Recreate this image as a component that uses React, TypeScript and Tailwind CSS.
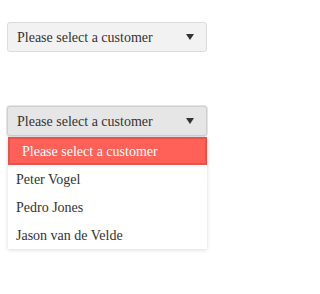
import React from 'react';

const customers = ['Peter Vogel', 'Pedro Jones', 'Jason van de Velde'];

function Caret() {
  return (
    <svg width="8" height="6" viewBox="0 0 8 6" className="fill-[#333]">
      <path d="M0 0 L8 0 L4 6 Z" />
    </svg>
  );
}

export default function App() {
  return (
    <div
      className="min-h-[294px] bg-white pl-[7px] pt-[22px] text-[14px] text-[#333]"
      style={{ fontFamily: '"Liberation Serif", "Times New Roman", serif' }}
    >
      <div className="flex h-[30px] w-[200px] items-center justify-between rounded-[3px] border border-[#dcdcdc] bg-[#f2f2f2] pl-[9px] pr-[12px]">
        <span>Please select a customer</span>
        <Caret />
      </div>

      <div className="mt-[54px] w-[200px]">
        <div className="flex h-[30px] items-center justify-between rounded-[3px] border border-[#cfcfcf] bg-[#e6e6e6] pl-[9px] pr-[12px] ring-1 ring-[#e4e4e4]">
          <span>Please select a customer</span>
          <Caret />
        </div>
        <div className="mt-px ml-px w-[199px] bg-white shadow-[0_1px_4px_rgba(0,0,0,0.15)]">
          <div className="flex h-[28px] items-center border-2 border-[#e8524a] bg-[#ff6159] pl-[12px] text-white">
            Please select a customer
          </div>
          {customers.map((c) => (
            <div key={c} className="flex h-[28px] items-center pl-[8px]">
              {c}
            </div>
          ))}
        </div>
      </div>
    </div>
  );
}
